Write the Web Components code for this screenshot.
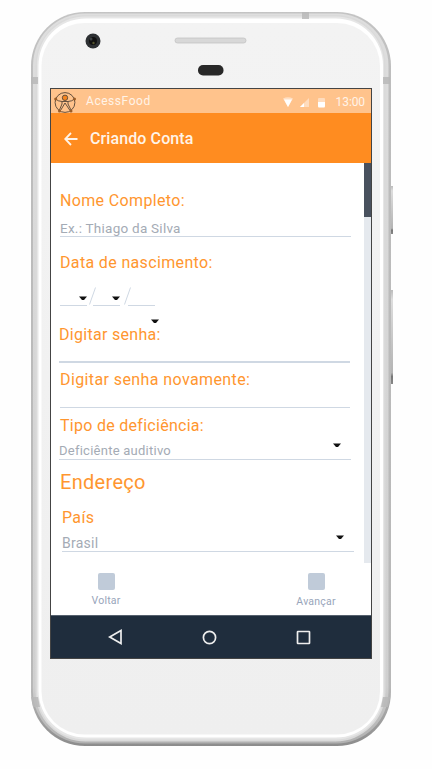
<!DOCTYPE html>
<html lang="pt">
<head>
<meta charset="utf-8">
<title>AcessFood</title>
<style>
body{margin:0;background:#fefefe;font-family:Roboto,"Liberation Sans",sans-serif;width:432px;height:769px;overflow:hidden}
</style>
</head>
<body>
<phone-frame>
  <status-bar>AcessFood<span slot="time">13:00</span></status-bar>
  <app-bar>Criando Conta</app-bar>
  <scroll-area>
    <form-field style="margin-top:28px;--gap:9px">Nome Completo:<span slot="value">Ex.: Thiago da Silva</span></form-field>
    <date-field>Data de nascimento:</date-field>
    <form-field style="margin:19px 1px 0 -1px;--ls:.3px;--gap:16px;--h:0px;--lw:2px">Digitar senha:</form-field>
    <form-field style="margin:7px 1px 0 0;--ls:.4px;--gap:17px;--h:0px">Digitar senha novamente:</form-field>
    <form-field select style="margin:8px 0 0 -1px;--ls:.28px;--gap:7px;--vs:13px"><span style="margin-left:1px">Tipo de deficiência:</span><span slot="value">Deficiênte auditivo</span></form-field>
    <section-title>Endereço</section-title>
    <form-field select style="margin:14px -3px 0 2px;--gap:7px;--vs:14px">País<span slot="value">Brasil</span></form-field>
  </scroll-area>
  <action-bar><action-item>Voltar</action-item><action-item style="--pt:1px">Avançar</action-item></action-bar>
  <nav-bar></nav-bar>
</phone-frame>
<script>
const define = (name, html) => {
  const t = document.createElement('template');
  t.innerHTML = html;
  customElements.define(name, class extends HTMLElement {
    constructor() {
      super();
      this.attachShadow({mode: 'open'}).append(t.content.cloneNode(true));
    }
  });
};
define('phone-frame', `<style>
:host{display:block;position:relative;box-sizing:border-box;width:432px;height:769px;padding:88px 60px 0 50px}
svg{position:absolute;left:0;top:0;z-index:-1}
.screen{box-sizing:border-box;width:322px;height:571px;border:1px solid #444;background:#fff;display:flex;flex-direction:column}
</style>
<svg width="432" height="769" viewBox="0 0 432 769">
<defs>
<linearGradient id="o" x1="0" y1="0" x2="0" y2="1"><stop offset="0" stop-color="#c4c4c4"/><stop offset=".1" stop-color="#bdbdbd"/><stop offset=".92" stop-color="#b8b8b8"/><stop offset="1" stop-color="#8c8c8c"/></linearGradient>
<linearGradient id="m" x1="0" y1="0" x2="0" y2="1"><stop offset="0" stop-color="#dedede"/><stop offset=".92" stop-color="#cfcfcf"/><stop offset="1" stop-color="#b0b0b0"/></linearGradient>
<linearGradient id="f" x1="0" y1="0" x2="0" y2="1"><stop offset="0" stop-color="#f3f3f3"/><stop offset="1" stop-color="#efefef"/></linearGradient>
<linearGradient id="b" x1="0" y1="0" x2="0" y2="1"><stop offset="0" stop-color="#bbb"/><stop offset=".1" stop-color="#ddd"/><stop offset=".88" stop-color="#b4b4b4"/><stop offset=".92" stop-color="#777"/><stop offset="1" stop-color="#888"/></linearGradient>
</defs>
<rect x="389" y="186" width="4" height="48" fill="url(#b)"/>
<rect x="389" y="290" width="4" height="94" fill="url(#b)"/>
<rect x="31" y="12" width="360" height="734" rx="54" fill="url(#o)"/>
<rect x="33" y="13.5" width="355.500" height="730" rx="52" fill="url(#m)"/>
<rect x="35.500" y="15" width="350" height="726.500" rx="50" fill="#dadada"/>
<rect x="37" y="16.500" width="347" height="723" rx="48" fill="#e6e6e6"/>
<rect x="38.500" y="18.500" width="344.500" height="719" rx="47" fill="#fff"/>
<rect x="41.500" y="23" width="338.500" height="711.500" rx="43" fill="url(#f)"/>
<g fill="#b8b8b8"><path d="M31 77h7v7h-7zM383 77h7v7h-7zM302 12h7v7h-7zM31 697h7l2 10h-7zM390 697h-7l-2 10h7z" opacity=".85"/></g>
<circle cx="93" cy="41" r="7.500" fill="#2d3033"/><circle cx="93" cy="41" r="4" fill="#111"/><circle cx="93.500" cy="43" r="1.200" fill="#55552f"/><circle cx="91" cy="39" r="1.500" fill="#3d4144"/>
<rect x="175" y="38" width="71" height="5" rx="2.500" fill="#d8d8d8" stroke="#c3c3c3" stroke-width=".8"/>
<rect x="198" y="65" width="25.500" height="10.500" rx="5" fill="#282828"/>
</svg><div class="screen"><slot></slot></div>`);
define('status-bar', `<style>
:host{display:flex;align-items:center;height:24px;background:#ffc38c;color:#fff3e8;font-size:12px;letter-spacing:.55px;box-sizing:border-box;padding:0 6px 0 3px}
.logo{margin-right:10px;margin-top:2px}.ic{margin-left:auto;margin-right:9px;margin-top:2px}.t{letter-spacing:-.1px;padding-top:1px}
</style>
<svg class="logo" width="22" height="22" viewBox="0 0 22 22" fill="none" stroke="#65513f" stroke-width="1"><circle cx="11" cy="11.500" r="9.900"/><path d="M1 7.500Q4 10.500 8 10.500H14Q18 10.500 21 7.500M8 10.500V13L5 20M14 10.500V13L17.500 20M11 12L6.500 19.500M11 12L16 19.500"/><circle cx="11" cy="6.800" r="2.700" fill="#f5841f"/><g fill="#9a5c27" stroke="none"><circle cx="1.700" cy="8" r="1.500"/><circle cx="20.500" cy="8" r="1.500"/><circle cx="5.500" cy="20" r="1.500"/><circle cx="17" cy="20" r="1.500"/></g></svg>
<slot></slot>
<svg class="ic" width="44" height="11" viewBox="0 0 44 11"><path d="M0 1.500Q5 -1 10 1.500L5 10z" fill="#ffdfc3"/><path d="M1 2.500H9L5 10z" fill="#fff"/><path d="M17 10L26 1V10z" fill="#ffdcbd"/><path d="M17 10L21 6V10z" fill="#fff"/><path d="M35 2Q35 1 36 1H41Q42 1 42 2V5H35z" fill="#ffdcbd"/><path d="M35 5H42V9Q42 10.500 41 10.500H36Q35 10.500 35 9z" fill="#fff"/></svg>
<span class="t"><slot name="time"></slot></span>`);
define('app-bar', `<style>
:host{display:flex;align-items:center;height:50px;background:#ff8c20;color:#fff4e8;font-size:16px;font-weight:500;padding-left:13px;letter-spacing:.1px}
svg{margin-right:12px;margin-top:1px}
</style><svg width="14" height="14" viewBox="0 0 14 14" fill="none" stroke="#fff4e8" stroke-width="1.800"><path d="M13.500 7H1.500M7 1L1.200 7L7 13"/></svg><slot></slot>`);
define('scroll-area', `<style>
:host{display:flex;height:400px}
.c{flex:1;padding:0 13px 0 9px;min-width:0;display:flex;flex-direction:column;box-sizing:border-box}
.track{width:7px;background:#e5e9ee}.thumb{height:54px;background:#49515e}
</style><div class="c"><slot></slot></div><div class="track"><div class="thumb"></div></div>`);
define('form-field', `<style>
:host{display:block;color:#ff962f;font-size:16px}
.l{line-height:20px;letter-spacing:var(--ls,.35px)}
.v{display:flex;margin-top:var(--gap);height:var(--h,16px);line-height:16px;font-size:var(--vs,13.500px);color:#a4abb5;border-bottom:var(--lw,1px) solid #cfd8e3;letter-spacing:.25px;overflow:hidden}
svg{display:none}:host([select]) svg{display:block;margin-left:auto;margin-right:10px}
</style><div class="l"><slot></slot></div><div class="v"><slot name="value"></slot><svg width="8" height="5" viewBox="0 0 8 5"><path d="M0 .5H8L5 4H3z" fill="#111"/></svg></div>`);
define('date-field', `<style>
:host{display:block;color:#ff962f;font-size:16px;margin-top:16px;height:53px}
.l{line-height:20px;letter-spacing:.35px}
.r{display:flex;align-items:flex-end;height:33px;position:relative}
.s{width:27px;height:15px;border-bottom:1px solid #cfd8e3;display:flex}
.s svg{margin:6px 0 0 19px}.stray{position:absolute;left:91px;top:46px}
.d{margin:0 -3px 1px 2px}
</style><div class="l"><slot></slot></div><div class="r">
<div class="s"><svg width="8" height="5"><path d="M0 .5H8L5 4H3z" fill="#111"/></svg></div><svg class="d" width="7" height="18"><path d="M.5 17.500L6.500 .5" stroke="#cfd8e3"/></svg>
<div class="s"><svg width="8" height="5"><path d="M0 .5H8L5 4H3z" fill="#111"/></svg></div><svg class="d" style="margin-left:4px" width="7" height="18"><path d="M.5 17.500L6.500 .5" stroke="#cfd8e3"/></svg>
<div class="s"></div><svg class="stray" width="8" height="5"><path d="M0 .5H8L5 4H3z" fill="#111"/></svg></div>`);
define('section-title', `<style>:host{display:block;margin:10px 0 0 0;font-size:20px;line-height:24px;color:#ff962f;letter-spacing:.3px}</style><slot></slot>`);
define('action-bar', `<style>:host{display:flex;justify-content:space-between;height:52px;padding:0 25px;background:#fff;box-sizing:border-box}</style><slot></slot>`);
define('action-item', `<style>
:host{display:flex;flex-direction:column;align-items:center;width:60px;padding-top:10px;font-size:10.500px;line-height:12px;color:#98a5ba;letter-spacing:.2px}
i{width:17px;height:17px;border-radius:2px;background:#c0cbd9;margin-bottom:5px}span{padding-top:var(--pt,0)}
</style><i></i><span><slot></slot></span>`);
define('nav-bar', `<style>
:host{display:flex;flex:1;align-items:center;background:#1f2d3d;justify-content:space-between;padding:0 60px 0 57px;border-top:1px solid #56616e;box-sizing:border-box}
svg{fill:none;stroke:#eee;stroke-width:1.700}
</style><svg width="15" height="16"><path d="M13 1.500V14.500L1.700 8z"/></svg><svg width="15" height="15"><circle cx="7.500" cy="7.500" r="6.100"/></svg><svg width="15" height="15"><rect x="1.500" y="1.500" width="12" height="12" rx=".5"/></svg>`);
</script>
</body>
</html>
